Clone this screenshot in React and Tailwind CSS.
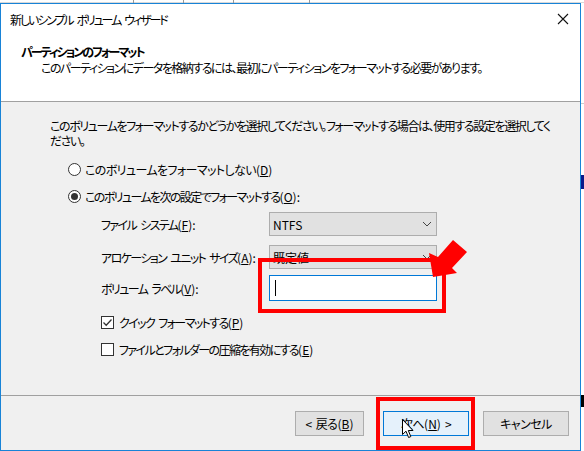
import React from 'react';

const font = "font-['Noto_Sans_CJK_JP',sans-serif] [font-feature-settings:'palt']";

// word gap that survives the tight letter-spacing
const Sp = () => <span className="inline-block w-[4px]" />;

// access key suffix such as (D), kept at normal spacing
const Key = ({ k, colon }) => (
  <span className="tracking-normal">
    (<u>{k}</u>){colon ? ':' : ''}
  </span>
);

function Radio({ checked, children, className }) {
  return (
    <div className="flex items-center h-4 ml-[67px]">
      <span className="w-[13px] h-[13px] rounded-full border border-[#333] bg-white flex items-center justify-center">
        {checked && <span className="w-[7px] h-[7px] rounded-full bg-[#333]" />}
      </span>
      <span className={`ml-[4px] ${className}`}>{children}</span>
    </div>
  );
}

function Checkbox({ checked, children }) {
  return (
    <div className="flex items-center h-4 ml-[100px]">
      <span className="w-[13px] h-[13px] border border-[#333] bg-white flex items-center justify-center">
        {checked && (
          <svg width="11" height="11" viewBox="0 0 11 11">
            <path d="M1.5 5.5 L4.2 8.2 L9.5 2.5" fill="none" stroke="#333" strokeWidth="1.3" />
          </svg>
        )}
      </span>
      <span className="ml-[5px] tracking-[-1.6px]">{children}</span>
    </div>
  );
}

function Combo({ value }) {
  return (
    <div className="w-[168px] h-[24px] bg-[#e1e1e1] border border-[#adadad] flex items-center justify-between pl-[3px] pr-[4px]">
      <span>{value}</span>
      <svg width="10" height="6" viewBox="0 0 10 6">
        <path d="M1 1 L5 5 L9 1" fill="none" stroke="#444" strokeWidth="1" />
      </svg>
    </div>
  );
}

function Field({ label, children, className }) {
  return (
    <div className={`flex items-center ml-[100px] ${className}`}>
      <span className="w-[168px] whitespace-nowrap tracking-[-1.6px]">{label}</span>
      {children}
    </div>
  );
}

function Button({ children, primary, className }) {
  return (
    <div
      className={`h-[25px] flex items-center justify-center border ${
        primary ? 'bg-[#e5f1fb] border-[#0078d7]' : 'bg-[#e1e1e1] border-[#adadad]'
      } ${className}`}
    >
      {children}
    </div>
  );
}

export default function App() {
  return (
    <div className={`relative w-[584px] h-[451px] overflow-hidden bg-white text-[12px] leading-[15px] text-black ${font}`}>
      {/* list view header peeking behind the dialog */}
      <div className="relative h-[3px] bg-white border-b border-[#d9d9d9]">
        <span className="absolute left-[133px] top-0 h-[3px] w-px bg-[#999]" />
        <span className="absolute left-[183px] top-0 h-[3px] w-px bg-[#999]" />
        <span className="absolute left-[233px] top-0 h-[3px] w-px bg-[#999]" />
        <span className="absolute left-[309px] top-0 h-[3px] w-px bg-[#999]" />
      </div>

      <div className="flex">
        <div className="w-[581px] h-[448px] border border-[#1883d7] flex flex-col">
          {/* title bar */}
          <div className="h-[30px] flex items-center justify-between bg-white pl-[9px] pr-[8px]">
            <span className="tracking-[-2.1px]">
              新しいシンプル<Sp />ボリューム<Sp />ウィザード
            </span>
            <svg width="12" height="12" viewBox="0 0 12 12" className="mr-[3px]">
              <path d="M1 1 L11 11 M11 1 L1 11" stroke="#111" strokeWidth="1.1" />
            </svg>
          </div>

          {/* page header */}
          <div className="h-[68px] bg-white border-b border-[#a0a0a0] pt-[10px] pl-[20px]">
            <div className="font-bold tracking-[-2px]">パーティションのフォーマット</div>
            <div className="pl-[20px] mt-[1px] tracking-[-1.5px]">
              このパーティションにデータを格納するには、最初にパーティションをフォーマットする必要があります。
            </div>
          </div>

          {/* page body */}
          <div className="h-[294px] bg-[#f0f0f0] border-b border-[#a0a0a0] pt-[16px]">
            <div className="pl-[49px] whitespace-nowrap tracking-[-1.4px]">
              <div>このボリュームをフォーマットするかどうかを選択してください。フォーマットする場合は、使用する設定を選択してく</div>
              <div>ださい。</div>
            </div>

            <div className="mt-[13px]">
              <Radio className="tracking-[-0.6px]">
                このボリュームをフォーマットしない<Key k="D" />
              </Radio>
            </div>
            <div className="mt-[11px]">
              <Radio checked className="tracking-[-1.6px]">
                このボリュームを次の設定でフォーマットする<Key k="O" colon />
              </Radio>
            </div>

            <Field className="mt-[8px]" label={<>ファイル<Sp />システム<Key k="F" colon /></>}>
              <Combo value="NTFS" />
            </Field>
            <Field className="mt-[9px]" label={<>アロケーション<Sp />ユニット<Sp />サイズ<Key k="A" colon /></>}>
              <Combo value="既定値" />
            </Field>
            <Field className="mt-[6px]" label={<>ボリューム<Sp />ラベル<Key k="V" colon /></>}>
              <div className="w-[168px] h-[26px] bg-white border border-[#0078d7] flex items-center pl-[5px]">
                <span className="w-px h-[16px] bg-black" />
              </div>
            </Field>

            <div className="mt-[13px]">
              <Checkbox checked>
                クイック<Sp />フォーマットする<Key k="P" />
              </Checkbox>
            </div>
            <div className="mt-[11px]">
              <Checkbox>
                ファイルとフォルダーの圧縮を有効にする<Key k="E" />
              </Checkbox>
            </div>
          </div>

          {/* wizard buttons */}
          <div className="flex-1 bg-[#f0f0f0] flex justify-end items-start pt-[15px] pr-[11px] tracking-[-0.5px]">
            <Button className="w-[69px]">
              &lt;<Sp />戻る<Key k="B" />
            </Button>
            <Button primary className="w-[86px] ml-[19px]">
              次へ<Key k="N" />
              <Sp />&gt;
            </Button>
            <Button className="w-[86px] ml-[14px]">キャンセル</Button>
          </div>
        </div>

        {/* window behind, right edge */}
        <div className="flex-1 bg-white relative">
          <span className="absolute left-0 top-[100px] w-full h-px bg-[#ccc]" />
          <span className="absolute left-0 top-[172px] w-full h-[14px] bg-[#0a1a8a]" />
          <span className="absolute left-0 top-[392px] w-full h-[12px] bg-black" />
        </div>
      </div>

      {/* annotations */}
      <div className="absolute left-[258px] top-[258px] w-[188px] h-[55px] border-[4px] border-[#ff0000]" />
      <div className="absolute left-[376px] top-[397px] w-[99px] h-[53px] border-[4px] border-[#ff0000]" />
      <svg className="absolute left-[420px] top-[230px]" width="60" height="60" viewBox="0 0 60 60">
        <polygon points="33,10 47,22 32,38 37,43 13,47 9,23 18,27" fill="#ff0000" />
      </svg>

      {/* mouse pointer */}
      <svg className="absolute left-[402px] top-[419px]" width="13" height="20" viewBox="0 0 13 20">
        <path d="M0.5 0.5 L0.5 15.5 L4 12.2 L6.6 18.5 L8.8 17.6 L6.3 11.5 L11 11.5 Z" fill="#fff" stroke="#000" strokeWidth="1" />
      </svg>
    </div>
  );
}
